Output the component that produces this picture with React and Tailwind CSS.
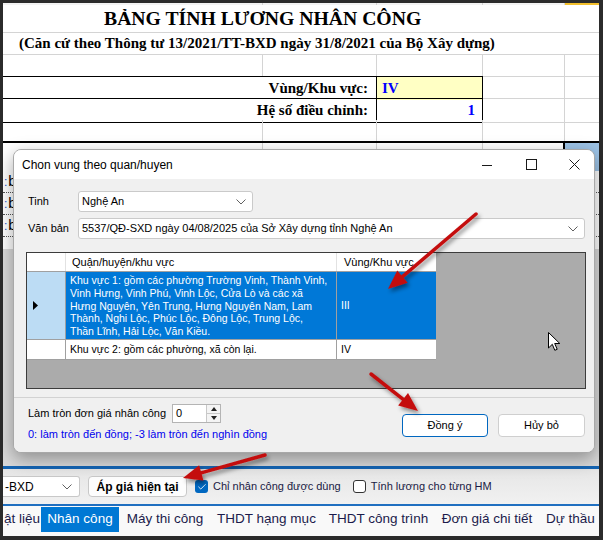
import { Check } from "lucide-react"

const ARROWS = [
  [476, 214, 388, 289],
  [371, 374, 418, 411],
  [265, 455, 183, 478],
]

function arrowParts(x1, y1, x2, y2, len = 19, half = 8) {
  const dx = x2 - x1
  const dy = y2 - y1
  const d = Math.hypot(dx, dy)
  const ux = dx / d
  const uy = dy / d
  const bx = x2 - ux * len
  const by = y2 - uy * len
  const px = -uy
  const py = ux
  return {
    line: [x1, y1, bx + ux * 3, by + uy * 3],
    head: `${x2},${y2} ${bx + px * half},${by + py * half} ${bx - px * half},${by - py * half}`,
  }
}

function Chevron() {
  return (
    <svg width="10" height="6" viewBox="0 0 10 6" className="shrink-0">
      <polyline points="0.5,0.5 5,5 9.5,0.5" fill="none" stroke="#606060" strokeWidth="1" />
    </svg>
  )
}

function Select({ className, text }) {
  return (
    <div className={`flex items-center bg-white border border-[#cacaca] rounded-[3px] pl-[3px] pr-[6px] ${className}`}>
      <span className="flex-1 whitespace-nowrap overflow-hidden">{text}</span>
      <Chevron />
    </div>
  )
}

function WinButtons() {
  return (
    <div className="ml-auto flex h-full">
      <div className="w-[45px] flex items-center justify-center">
        <svg width="10" height="10" viewBox="0 0 10 10">
          <line x1="0" y1="5.5" x2="10" y2="5.5" stroke="#1a1a1a" strokeWidth="1" />
        </svg>
      </div>
      <div className="w-[45px] flex items-center justify-center">
        <svg width="11" height="11" viewBox="0 0 11 11">
          <rect x="0.5" y="0.5" width="10" height="10" fill="none" stroke="#1a1a1a" strokeWidth="1" />
        </svg>
      </div>
      <div className="w-[40px] flex items-center justify-center">
        <svg width="11" height="11" viewBox="0 0 11 11">
          <path d="M0.5 0.5 L10.5 10.5 M10.5 0.5 L0.5 10.5" stroke="#1a1a1a" strokeWidth="1" />
        </svg>
      </div>
    </div>
  )
}

function Dialog() {
  return (
    <div className="absolute left-[13px] top-[149px] w-[582px] h-[304px] rounded-[8px] bg-[#f0f0f0] border border-[#a8a8a8] shadow-[0_6px_18px_rgba(0,0,0,0.35)] overflow-hidden flex flex-col font-['Liberation_Sans',Arial,sans-serif] text-[11px] text-black">
      {/* title bar */}
      <div className="h-[29px] bg-white flex items-center shrink-0">
        <span className="pl-[8px] text-[12px]">Chon vung theo quan/huyen</span>
        <WinButtons />
      </div>

      {/* body */}
      <div className="pt-[12px] pl-[12px]">
        <div className="flex items-center h-[21px] pl-[2px]">
          <span className="w-[50px]">Tinh</span>
          <Select className="w-[175px] h-[21px]" text="Nghệ An" />
        </div>
        <div className="flex items-center h-[21px] pl-[2px] mt-[6px]">
          <span className="w-[50px]">Văn bản</span>
          <Select className="w-[507px] h-[21px]" text="5537/QĐ-SXD ngày 04/08/2025 của Sở Xây dựng tỉnh Nghệ An" />
        </div>

        {/* grid */}
        <div className="mt-[13px] w-[560px] h-[137px] border border-[#3c3c3c] bg-[#ababab]">
          <div className="flex h-[19px] bg-white w-[409px] border-b border-[#a0a0a0]">
            <div className="w-[39px] border-r border-[#e2e2e2]" />
            <div className="w-[271px] border-r border-[#e2e2e2] pl-[6px] flex items-center">Quận/huyện/khu vực</div>
            <div className="w-[99px] pl-[7px] flex items-center">Vùng/Khu vực</div>
          </div>
          <div className="flex h-[68px] w-[409px] border-b border-[#a0a0a0] text-[10.5px]">
            <div className="w-[39px] bg-[#bcdcf4] border-r border-[#a0a0a0] flex items-center pl-[6px]">
              <svg width="5" height="9" viewBox="0 0 5 9">
                <polygon points="0,0 5,4.5 0,9" fill="#000" />
              </svg>
            </div>
            <div className="w-[271px] bg-[#0078d7] border-r border-[#a0a0a0] text-white pl-[4px] pt-[2px] leading-[12.8px] whitespace-nowrap overflow-hidden">
              Khu vực 1: gồm các phường Trường Vinh, Thành Vinh,
              <br />
              Vinh Hưng, Vinh Phú, Vinh Lộc, Cửa Lò và các xã
              <br />
              Hưng Nguyên, Yên Trung, Hưng Nguyên Nam, Lam
              <br />
              Thành, Nghi Lộc, Phúc Lộc, Đông Lộc, Trung Lộc,
              <br />
              Thần Lĩnh, Hải Lộc, Văn Kiều.
            </div>
            <div className="w-[99px] bg-[#0078d7] text-white pl-[4px] flex items-center">III</div>
          </div>
          <div className="flex h-[20px] w-[409px] bg-white border-b border-[#a0a0a0] text-[10.5px]">
            <div className="w-[39px] border-r border-[#a0a0a0]" />
            <div className="w-[271px] border-r border-[#a0a0a0] pl-[4px] flex items-center">
              Khu vực 2: gồm các phường, xã còn lại.
            </div>
            <div className="w-[99px] pl-[4px] flex items-center">IV</div>
          </div>
        </div>
      </div>

      {/* footer */}
      <div className="mt-[8px] border-t border-[#d2d2d2] flex-1 bg-[#f0f0f0] flex pl-[14px] pr-[9px]">
        <div className="pt-[6px]">
          <div className="flex items-center h-[19px]">
            <span className="w-[144px]">Làm tròn đơn giá nhân công</span>
            <div className="w-[49px] h-[19px] flex bg-white border border-[#b4b4b4]">
              <span className="flex-1 pl-[3px] flex items-center">0</span>
              <div className="w-[14px] flex flex-col border-l border-[#c8c8c8] bg-[#f4f4f4]">
                <div className="flex-1 flex items-center justify-center border-b border-[#c8c8c8]">
                  <svg width="6" height="4" viewBox="0 0 6 4">
                    <polygon points="3,0 6,4 0,4" fill="#222" />
                  </svg>
                </div>
                <div className="flex-1 flex items-center justify-center">
                  <svg width="6" height="4" viewBox="0 0 6 4">
                    <polygon points="0,0 6,0 3,4" fill="#222" />
                  </svg>
                </div>
              </div>
            </div>
          </div>
          <div className="mt-[5px] leading-[13px] text-[#0000ee]">
            0: làm tròn đến đồng; -3 làm tròn đến nghìn đồng
          </div>
        </div>
        <div className="ml-auto flex gap-[10px] pt-[16px]">
          <div className="w-[86px] h-[23px] rounded-[4px] bg-white border border-[#0067c0] flex items-center justify-center">
            Đồng ý
          </div>
          <div className="w-[87px] h-[23px] rounded-[4px] bg-white border border-[#cfcfcf] flex items-center justify-center">
            Hủy bỏ
          </div>
        </div>
      </div>
    </div>
  )
}

function SheetTop() {
  return (
    <div className="font-['Liberation_Serif','Times_New_Roman',serif] font-bold text-black">
      <div className="h-[2px] grid grid-cols-[260px_114px_106px_82px_34px] bg-[#f3f3f3]">
        <div className="border-r border-[#d4d4d4]" />
        <div className="border-r border-[#d4d4d4]" />
        <div className="border-r border-[#d4d4d4]" />
        <div className="border-r border-[#d4d4d4]" />
        <div className="bg-[#f2bf2c]" />
      </div>
      <div className="h-[28px] border-b border-[#d4d4d4] flex items-center pl-[101px] text-[19.7px] leading-none">
        BẢNG TÍNH LƯƠNG NHÂN CÔNG
      </div>
      <div className="h-[22px] border-b border-[#d4d4d4] flex items-center pl-[16px] text-[15px] leading-none">
        (Căn cứ theo Thông tư 13/2021/TT-BXD ngày 31/8/2021 của Bộ Xây dựng)
      </div>
      <div className="h-[21px] grid grid-cols-[260px_114px_106px_82px_34px]">
        <div className="border-r border-[#d4d4d4]" />
        <div className="border-r border-[#d4d4d4]" />
        <div className="border-r border-[#d4d4d4]" />
        <div className="border-r border-[#d4d4d4]" />
        <div />
      </div>
      <div className="h-[22px] grid grid-cols-[260px_114px_106px_82px_34px] text-[15px]">
        <div className="col-span-2 border-t border-r border-black flex items-center justify-end pr-[8px]">Vùng/Khu vực:</div>
        <div className="border-t border-r border-black bg-[#ffffc4] text-[#0000ff] flex items-center pl-[5px]">IV</div>
        <div className="border-t border-r border-[#d4d4d4]" />
        <div className="border-t border-[#d4d4d4]" />
      </div>
      <div className="h-[22px] grid grid-cols-[260px_114px_106px_82px_34px] text-[15px]">
        <div className="col-span-2 border-y border-r border-black flex items-center justify-end pr-[8px]">Hệ số điều chỉnh:</div>
        <div className="border-y border-r border-black text-[#0000ff] flex items-center justify-end pr-[7px]">1</div>
        <div className="border-y border-r border-[#d4d4d4]" />
        <div className="border-y border-[#d4d4d4]" />
      </div>
      <div className="h-[21px] grid grid-cols-[260px_114px_106px_82px_34px]">
        <div className="border-r border-[#d4d4d4]" />
        <div className="border-r border-[#d4d4d4]" />
        <div className="border-r border-[#d4d4d4]" />
        <div className="border-r border-[#d4d4d4]" />
        <div />
      </div>
    </div>
  )
}

function SheetLower() {
  return (
    <div className="h-[325px] flex flex-col">
      <div className="h-[30px] grid grid-cols-[260px_114px_106px_82px_34px] border-t-2 border-black">
        <div className="border-r border-[#d4d4d4]" />
        <div className="border-r border-[#d4d4d4]" />
        <div className="border-r border-[#d4d4d4]" />
        <div className="border-r-2 border-black" />
        <div className="bg-[#9dc3e6]" />
      </div>
      {[0, 1, 2].map((i) => (
        <div
          key={i}
          className="h-[22px] border-b border-dotted border-[#555] flex items-center pl-[1px] text-[15px] font-['Liberation_Sans',Arial,sans-serif]"
        >
          <span className="text-[#2255cc] text-[12px]">:</span>
          <span className="pl-[1px]">b</span>
        </div>
      ))}
      <div className="h-[12px] bg-white" />
      <div className="flex-1 bg-[#dadada]" />
    </div>
  )
}

function Toolbar() {
  return (
    <div className="h-[35px] bg-gradient-to-b from-[#e6e6e6] to-[#f1f1f1] flex items-center font-['Liberation_Sans',Arial,sans-serif] text-[11px] text-[#1a1a44]">
      <div className="w-[77px] h-[21px] bg-white border border-[#c8c8c8] border-l-0 rounded-r-[3px] flex items-center pl-[2px] pr-[7px]">
        <span className="flex-1 text-black text-[12px]">-BXD</span>
        <Chevron />
      </div>
      <div className="ml-[8px] w-[99px] h-[21px] bg-[#fdfdfd] border border-[#c8c8c8] rounded-[4px] flex items-center justify-center font-bold text-[12px] text-black">
        Áp giá hiện tại
      </div>
      <div className="ml-[8px] w-[13px] h-[13px] rounded-[3px] bg-[#0067c0] flex items-center justify-center">
        <Check className="w-[10px] h-[10px] text-white" strokeWidth={2} />
      </div>
      <span className="ml-[5px]">Chỉ nhân công được dùng</span>
      <div className="ml-[12px] w-[13px] h-[13px] rounded-[3px] bg-white border border-[#333]" />
      <span className="ml-[5px]">Tính lương cho từng HM</span>
    </div>
  )
}

function Tabs() {
  return (
    <div className="flex-1 bg-[#f9f9f9] font-['Liberation_Sans',Arial,sans-serif] text-[13.5px] text-[#1b1b4b]">
      <div className="h-[25px] mt-[1px] flex items-center whitespace-nowrap">
        <div className="w-[38px] pl-[1px]">ật liệu</div>
        <div className="w-[78px] h-full bg-[#0078d4] text-white flex items-center justify-center">Nhân công</div>
        <div className="w-[92px] flex justify-center">Máy thi công</div>
        <div className="w-[111px] flex justify-center">THDT hạng mục</div>
        <div className="w-[113px] flex justify-center">THDT công trình</div>
        <div className="w-[104px] flex justify-center">Đơn giá chi tiết</div>
        <div className="pl-[7px]">Dự thầu</div>
      </div>
    </div>
  )
}

export default function App() {
  return (
    <div className="relative w-[603px] h-[540px] overflow-hidden bg-[#2b2b2b] pt-[3px] pl-[3px] pr-[4px] pb-[4px]">
      <div className="w-full h-full bg-white flex flex-col overflow-hidden">
        <SheetTop />
        <SheetLower />
        <div className="h-[3px] bg-[#1565b4]" />
        <Toolbar />
        <div className="h-[2px] bg-[#1f6fc0]" />
        <Tabs />
      </div>

      <Dialog />

      {/* mouse cursor */}
      <svg className="absolute left-[548px] top-[332px] pointer-events-none" width="13" height="20" viewBox="0 0 13 20">
        <path d="M0.5 0.5 L0.5 16 L4.3 12.3 L6.8 18.3 L9.2 17.3 L6.7 11.5 L11.8 11.5 Z" fill="#fff" stroke="#000" strokeWidth="1" />
      </svg>

      {/* red annotation arrows */}
      <svg className="absolute left-0 top-0 pointer-events-none" width="603" height="540" viewBox="0 0 603 540">
        <defs>
          <filter id="sh" x="-20%" y="-20%" width="140%" height="140%">
            <feDropShadow dx="2" dy="3" stdDeviation="2" floodColor="#000" floodOpacity="0.45" />
          </filter>
        </defs>
        {ARROWS.map((a, i) => {
          const p = arrowParts(...a)
          return (
            <g key={i} filter="url(#sh)">
              <line x1={p.line[0]} y1={p.line[1]} x2={p.line[2]} y2={p.line[3]} stroke="#c41010" strokeWidth="3.5" strokeLinecap="round" />
              <polygon points={p.head} fill="#c41010" />
            </g>
          )
        })}
      </svg>
    </div>
  )
}
